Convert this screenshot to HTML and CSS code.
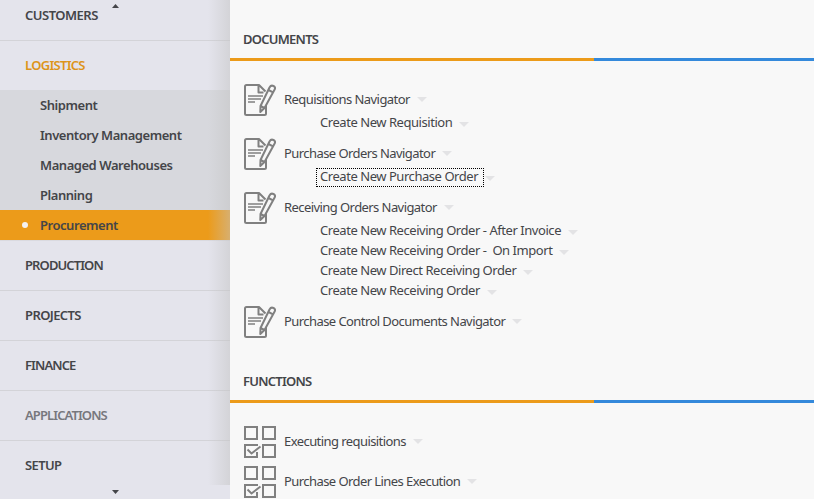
FILE: index.html
```
<!DOCTYPE html>
<html lang="en">
<head>
<meta charset="utf-8">
<title>Procurement</title>
<link rel="stylesheet" href="styles.css">
</head>
<body>
<svg class="defs" aria-hidden="true">
  <symbol id="doc" viewBox="0 0 32 32">
    <g fill="none" stroke="#808080" stroke-width="2" stroke-linejoin="round">
      <path d="M22 21V29.500Q22 31 20.500 31H2.500Q1 31 1 29.500V2.500Q1 1 2.500 1H15L21.500 7.500M14.500 1V8.500H19.500"/>
      <path d="M4 12H19M4 15H17M4 18H11" stroke-width="1.600"/>
      <path d="M16.500 22L25.500 3.500Q27 .800 29.500 2Q32 3.300 30.500 5.700L20.500 24L16.300 28ZM24.500 6L29 8.300M16.500 22L20.500 24"/>
    </g>
  </symbol>
  <symbol id="checks" viewBox="0 0 32 32">
    <g fill="none" stroke="#808080" stroke-width="2">
      <path d="M1 1H13V13H1ZM19 1H31V13H19ZM19 19H31V31H19Z"/>
      <path d="M14 19H1V31H13V26"/>
      <path d="M3.500 23.500L7.500 27.500L16.500 20.500"/>
    </g>
  </symbol>
</svg>
<div class="app">
  <nav class="sidebar">
    <a class="item first">CUSTOMERS</a>
    <a class="item active">LOGISTICS</a>
    <div class="submenu">
      <a class="sub">Shipment</a>
      <a class="sub">Inventory Management</a>
      <a class="sub">Managed Warehouses</a>
      <a class="sub">Planning</a>
      <a class="sub selected">Procurement</a>
    </div>
    <a class="item wide">PRODUCTION</a>
    <a class="item">PROJECTS</a>
    <a class="item wide">FINANCE</a>
    <a class="item wide muted">APPLICATIONS</a>
    <a class="item last">SETUP</a>
    <i class="scroll up"></i>
    <i class="scroll down"></i>
    <i class="shade"></i>
  </nav>
  <main class="content">
    <h2>DOCUMENTS</h2>
    <div class="rule"></div>
    <section class="documents">
      <div class="nav"><svg class="icon"><use href="#doc"/></svg><a>Requisitions Navigator</a><i class="more"></i></div>
      <div class="actions">
        <div class="action"><a>Create New Requisition</a><i class="more"></i></div>
      </div>
      <div class="nav"><svg class="icon"><use href="#doc"/></svg><a>Purchase Orders Navigator</a><i class="more"></i></div>
      <div class="actions">
        <div class="action"><a class="focused">Create New Purchase Order</a><i class="more"></i></div>
      </div>
      <div class="nav"><svg class="icon"><use href="#doc"/></svg><a>Receiving Orders Navigator</a><i class="more"></i></div>
      <div class="actions">
        <div class="action"><a>Create New Receiving Order - After Invoice</a><i class="more"></i></div>
        <div class="action"><a>Create New Receiving Order -&nbsp; On Import</a><i class="more"></i></div>
        <div class="action"><a>Create New Direct Receiving Order</a><i class="more"></i></div>
        <div class="action"><a>Create New Receiving Order</a><i class="more"></i></div>
      </div>
      <div class="nav"><svg class="icon"><use href="#doc"/></svg><a>Purchase Control Documents Navigator</a><i class="more"></i></div>
    </section>
    <h2>FUNCTIONS</h2>
    <div class="rule"></div>
    <section class="functions">
      <div class="nav"><svg class="icon"><use href="#checks"/></svg><a>Executing requisitions</a><i class="more"></i></div>
      <div class="nav"><svg class="icon"><use href="#checks"/></svg><a>Purchase Order Lines Execution</a><i class="more"></i></div>
    </section>
  </main>
</div>
</body>
</html>
```
FILE: styles.css
```
* { box-sizing: border-box; }
body {
  margin: 0;
  overflow: hidden;
  background: #f8f8f8;
  color: #444549;
  font: 13px/20px "Noto Sans", sans-serif;
  letter-spacing: -0.45px;
}
.defs { display: none; }
.app { display: flex; height: 499px; }

.sidebar {
  position: relative;
  flex: 0 0 230px;
  overflow: hidden;
  background: #e4e4ec;
  font-weight: 600;
}
.item {
  display: block;
  height: 50px;
  padding-left: 25px;
  border-bottom: 1px solid #d3d3d8;
  line-height: 48px;
  letter-spacing: -0.6px;
}
.item.first { height: 41px; line-height: 30px; letter-spacing: -0.5px; }
.item.active { height: 49px; border: 0; color: #dd9419; letter-spacing: -0.7px; }
.item.wide { letter-spacing: -0.9px; }
.item.muted { color: #77777d; }
.item.last { height: 59px; border: 0; }
.submenu { background: #d7d8dd; border-bottom: 1px solid #dadae0; }
.sub { display: block; position: relative; height: 30px; padding-left: 40px; line-height: 30px; }
.sub.selected { background: #ec9b1a; }
.sub.selected::before {
  content: "";
  position: absolute;
  left: 22px;
  top: 12px;
  width: 6px;
  height: 6px;
  border-radius: 50%;
  background: #f4f1f0;
}
.scroll {
  position: absolute;
  left: 112px;
  width: 7px;
  height: 4px;
  background: #444549;
}
.scroll.up { top: 4px; clip-path: polygon(50% 0, 100% 100%, 0 100%); }
.scroll.down { top: 490px; clip-path: polygon(0 0, 100% 0, 50% 100%); }
.shade {
  position: absolute;
  top: 0;
  right: 0;
  width: 22px;
  height: 485px;
  background: linear-gradient(90deg, rgba(195, 195, 195, 0), rgba(195, 195, 195, .5));
}

.content { flex: 1; min-width: 0; }
h2 {
  margin: 0;
  padding: 29px 0 0 13px;
  height: 58px;
  font-size: 13px;
  font-weight: 600;
  line-height: 20px;
  letter-spacing: -0.75px;
}
.rule { height: 3px; background: linear-gradient(90deg, #ec9b1a 364px, #3489db 364px); }
.documents { height: 281px; padding: 23px 0 0 14px; }
.functions { padding: 23px 0 0 14px; }
.nav { display: flex; align-items: center; height: 32px; white-space: nowrap; letter-spacing: -0.57px; }
.functions .nav { margin-bottom: 8px; }
.nav a { margin: -3px 7px 0 8px; }
.nav .more { margin-top: -1px; }
.icon { width: 32px; height: 32px; }
.more {
  border: solid transparent;
  border-width: 5px 5px 0;
  border-top-color: #e3e3e5;
}
.actions { padding: 0 0 6px 76px; margin-top: -4px; }
.action { display: flex; align-items: center; height: 20px; white-space: nowrap; }
.action a { margin-right: 7px; }
.action .more { margin-top: 4px; }
.focused { position: relative; }
.focused::after {
  content: "";
  position: absolute;
  inset: 2px -6px -1px -4px;
  border: 1px dotted #000;
}
```
